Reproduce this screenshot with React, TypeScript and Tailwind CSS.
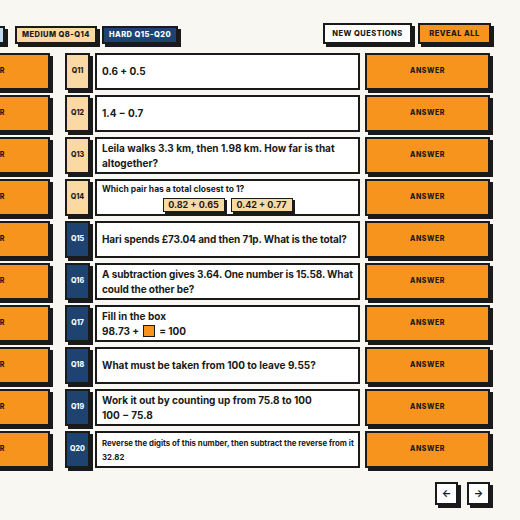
import React from "react";

type Tier = "medium" | "hard";

type Question = {
  id: string;
  tier: Tier;
  body: React.ReactNode;
};

const font = { fontFamily: "Inter, 'Noto Sans', sans-serif" };

const questions: Question[] = [
  { id: "Q11", tier: "medium", body: <p className="text-[10px] font-bold">0.6 + 0.5</p> },
  { id: "Q12", tier: "medium", body: <p className="text-[10px] font-bold">1.4 − 0.7</p> },
  {
    id: "Q13",
    tier: "medium",
    body: (
      <p className="text-[10px] font-bold leading-[15px]">
        Leila walks 3.3 km, then 1.98 km. How far is that altogether?
      </p>
    ),
  },
  {
    id: "Q14",
    tier: "medium",
    body: (
      <div className="flex w-full flex-col">
        <p className="text-[8.5px] font-bold leading-[12px]">Which pair has a total closest to 1?</p>
        <div className="mt-[3px] flex justify-center gap-[6px]">
          {["0.82 + 0.65", "0.42 + 0.77"].map((pair) => (
            <span
              key={pair}
              className="flex h-[14px] w-[62px] items-center justify-center border-[1.5px] border-[#1a1a1a] bg-[#fbd9a3] text-[9px] font-bold shadow-[2px_2px_0_#1a1a1a]"
            >
              {pair}
            </span>
          ))}
        </div>
      </div>
    ),
  },
  {
    id: "Q15",
    tier: "hard",
    body: (
      <p className="text-[10px] font-bold tracking-[-0.01em]">
        Hari spends £73.04 and then 71p. What is the total?
      </p>
    ),
  },
  {
    id: "Q16",
    tier: "hard",
    body: (
      <p className="text-[10px] font-bold leading-[15px] tracking-[-0.01em]">
        A subtraction gives 3.64. One number is 15.58. What could the other be?
      </p>
    ),
  },
  {
    id: "Q17",
    tier: "hard",
    body: (
      <div className="text-[10px] font-bold leading-[15px]">
        <p>Fill in the box</p>
        <p className="flex items-center gap-[4px]">
          98.73 +
          <span className="inline-block h-[12px] w-[12px] border-[1.5px] border-[#1a1a1a] bg-[#f7941d]" />
          = 100
        </p>
      </div>
    ),
  },
  {
    id: "Q18",
    tier: "hard",
    body: <p className="text-[10px] font-bold">What must be taken from 100 to leave 9.55?</p>,
  },
  {
    id: "Q19",
    tier: "hard",
    body: (
      <div className="text-[10px] font-bold leading-[15px]">
        <p>Work it out by counting up from 75.8 to 100</p>
        <p>100 − 75.8</p>
      </div>
    ),
  },
  {
    id: "Q20",
    tier: "hard",
    body: (
      <div className="whitespace-nowrap text-[7.8px] font-bold leading-[14px]">
        <p>Reverse the digits of this number, then subtract the reverse from it</p>
        <p>32.82</p>
      </div>
    ),
  },
];

function AnswerButton() {
  return (
    <button className="flex h-[37px] w-[125px] shrink-0 items-center justify-center border-2 border-[#1a1a1a] bg-[#f7941d] text-[7px] font-extrabold tracking-[0.08em] text-[#1a1a1a] shadow-[3px_3px_0_#1a1a1a]">
      ANSWER
    </button>
  );
}

function TierTab({ label, className }: { label: string; className: string }) {
  return (
    <button
      className={`flex h-[18px] shrink-0 items-center justify-center border-2 border-[#1a1a1a] text-[7.5px] font-extrabold tracking-[0.06em] shadow-[3px_3px_0_#1a1a1a] ${className}`}
    >
      {label}
    </button>
  );
}

export default function App() {
  return (
    <div className="h-[520px] w-[520px] overflow-hidden bg-[#f8f7f2] text-[#1a1a1a]" style={font}>
      {/* Toolbar */}
      <div className="flex items-start justify-between pr-[29px] pt-[23px]">
        <div className="ml-[-65px] mt-[3px] flex gap-[5px]">
          <TierTab label="EASY Q1-Q7" className="mr-[5px] w-[70px] bg-[#bfdcf3]" />
          <TierTab label="MEDIUM Q8-Q14" className="w-[82px] bg-[#fbd9a3]" />
          <TierTab label="HARD Q15-Q20" className="w-[76px] bg-[#1e4371] text-white" />
        </div>
        <div className="flex gap-[6px]">
          <button className="flex h-[21px] w-[89px] items-center justify-center border-2 border-[#1a1a1a] bg-white text-[7.5px] font-extrabold tracking-[0.06em] shadow-[3px_3px_0_#1a1a1a]">
            NEW QUESTIONS
          </button>
          <button className="flex h-[21px] w-[73px] items-center justify-center border-2 border-[#1a1a1a] bg-[#f7941d] text-[7.5px] font-extrabold tracking-[0.06em] shadow-[3px_3px_0_#1a1a1a]">
            REVEAL ALL
          </button>
        </div>
      </div>

      {/* Question rows */}
      <div className="ml-[-75px] mt-[9px] flex flex-col gap-[5px]">
        {questions.map((q) => (
          <div key={q.id} className="flex h-[37px]">
            <AnswerButton />
            <div
              className={`ml-[15px] flex w-[25px] shrink-0 items-center justify-center border-2 border-[#1a1a1a] text-[7px] font-extrabold shadow-[3px_3px_0_#1a1a1a] ${
                q.tier === "hard" ? "bg-[#1e4371] text-white" : "bg-[#fbd9a3]"
              }`}
            >
              {q.id}
            </div>
            <div className="mx-[5px] flex w-[265px] shrink-0 items-center border-2 border-[#1a1a1a] bg-white px-[5px]">
              {q.body}
            </div>
            <AnswerButton />
          </div>
        ))}
      </div>

      {/* Pager */}
      <div className="mt-[14px] flex justify-end gap-[9px] pr-[30px]">
        {["←", "→"].map((arrow) => (
          <button
            key={arrow}
            className="flex h-[23px] w-[23px] items-center justify-center border-2 border-[#1a1a1a] bg-white text-[10px] font-bold shadow-[3px_3px_0_#1a1a1a]"
          >
            {arrow}
          </button>
        ))}
      </div>
    </div>
  );
}
